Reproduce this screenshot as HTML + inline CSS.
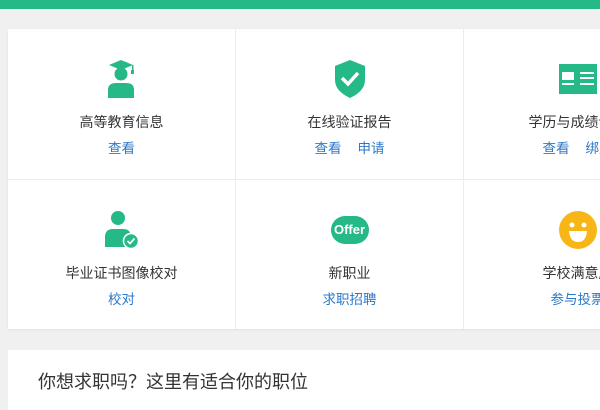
<!DOCTYPE html>
<html><head><meta charset="utf-8"><style>
*{margin:0;padding:0;box-sizing:border-box}
body{width:600px;height:400px;overflow:hidden;background:#f0f0f0;font-family:"Liberation Sans","Noto Sans CJK SC",sans-serif;position:relative}
.bar{position:absolute;left:0;top:0;width:600px;height:9px;background:#25b987}
.card{position:absolute;left:8px;top:29px;width:700px;height:300px;background:#fff;box-shadow:0 1px 3px rgba(0,0,0,.06)}
.cell{position:absolute;width:227px;height:150px;text-align:center}
.vl{position:absolute;top:0;width:1px;height:300px;background:#ececec}
.hl{position:absolute;left:0;top:150px;width:700px;height:1px;background:#ececec}
.ic{position:absolute;left:0;right:0;top:30px;height:40px;display:flex;justify-content:center;align-items:center}
.t{position:absolute;left:0;right:0;top:83px;font-size:14px;color:#333}
.l{position:absolute;left:0;right:0;top:108px;font-size:13.5px;color:#2c78c8}
.l span{margin:0 8px}
.card2{position:absolute;left:8px;top:350px;width:700px;height:60px;background:#fff}
.h{position:absolute;left:30px;top:18px;font-size:18px;color:#333;font-family:"Noto Sans CJK SC",sans-serif}
</style></head><body>
<div class="bar"></div>
<div class="card">
<div class="hl"></div>
<div class="vl" style="left:227px"></div>
<div class="vl" style="left:455px"></div>
<div class="cell" style="left:0;top:0">
<div class="ic"><svg width="28" height="38" viewBox="0 0 28 38"><path d="M1 5 L13 0 L25 5 L13 10Z" fill="#25b987"/><rect x="24" y="5" width="1.5" height="9" fill="#25b987"/><rect x="23" y="10" width="3" height="4" fill="#25b987"/><circle cx="13" cy="14" r="6.5" fill="#25b987"/><path d="M0 38 V30 Q0 23 8 23 H18 Q26 23 26 30 V38Z" fill="#25b987"/></svg></div>
<div class="t">高等教育信息</div><div class="l"><span>查看</span></div></div>
<div class="cell" style="left:228px;top:0">
<div class="ic"><svg width="32" height="38" viewBox="0 0 32 38"><path d="M16 0 L31 6 V20 Q31 31 16 38 Q1 31 1 20 V6Z" fill="#25b987"/><path d="M8 18 L14 24 L24 13" stroke="#fff" stroke-width="3.5" fill="none"/></svg></div>
<div class="t">在线验证报告</div><div class="l"><span>查看</span><span>申请</span></div></div>
<div class="cell" style="left:456px;top:0">
<div class="ic"><svg width="38" height="30" viewBox="0 0 38 30"><rect width="38" height="30" fill="#25b987"/><rect x="3" y="8" width="12" height="8" fill="#fff"/><rect x="3" y="19" width="12" height="2" fill="#fff"/><rect x="21" y="8" width="14" height="2" fill="#fff"/><rect x="21" y="13" width="14" height="2" fill="#fff"/><rect x="21" y="19" width="14" height="2" fill="#fff"/></svg></div>
<div class="t">学历与成绩认证</div><div class="l"><span>查看</span><span>绑定</span></div></div>
<div class="cell" style="left:0;top:151px">
<div class="ic" style="top:30px"><svg width="34" height="38" viewBox="0 0 34 38"><circle cx="13" cy="7" r="7" fill="#25b987"/><path d="M0 36 V26 Q0 18 8 18 H18 Q24 18 25 22 L25 36Z" fill="#25b987"/><circle cx="26" cy="30" r="7.5" fill="#25b987" stroke="#fff" stroke-width="1.5"/><path d="M22.5 30 L25 32.5 L29.5 27.5" stroke="#fff" stroke-width="1.8" fill="none"/></svg></div>
<div class="t">毕业证书图像校对</div><div class="l"><span>校对</span></div></div>
<div class="cell" style="left:228px;top:151px">
<div class="ic"><div style="width:38px;height:28px;border-radius:14px;background:#25b987;color:#fff;font-weight:bold;font-size:13px;line-height:28px;text-align:center">Offer</div></div>
<div class="t">新职业</div><div class="l"><span>求职招聘</span></div></div>
<div class="cell" style="left:456px;top:151px">
<div class="ic"><svg width="38" height="38" viewBox="0 0 38 38"><circle cx="19" cy="19" r="19" fill="#f8b616"/><circle cx="13" cy="14" r="2.5" fill="#fff"/><circle cx="25" cy="14" r="2.5" fill="#fff"/><path d="M10 20 H28 Q27 31 19 31 Q11 31 10 20Z" fill="#fff"/></svg></div>
<div class="t">学校满意度</div><div class="l"><span>参与投票</span></div></div>
</div>
<div class="card2"><div class="h">你想求职吗？这里有适合你的职位</div></div>
</body></html>
